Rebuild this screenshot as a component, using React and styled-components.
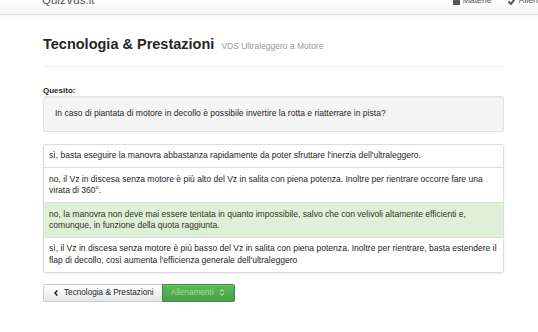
import React from 'react';
import styled, { createGlobalStyle } from 'styled-components';

const GlobalStyle = createGlobalStyle`
  html, body {
    margin: 0;
    padding: 0;
    background: #fff;
  }
  body {
    font-family: "Liberation Sans", Arial, sans-serif;
    font-size: 8.55px;
    line-height: 1.35;
    color: #262626;
  }
`;

const Navbar = styled.div`
  height: 14px;
  overflow: hidden;
  background: linear-gradient(to bottom, #fdfdfd, #f5f5f5);
  border-bottom: 1px solid #dcdcdc;
  box-shadow: 0 2px 3px rgba(0, 0, 0, 0.04);
`;

const NavInner = styled.div`
  display: flex;
  align-items: center;
  justify-content: space-between;
  margin-top: -9px;
  height: 20px;
  padding-left: 42px;
`;

const Brand = styled.span`
  font-size: 11.5px;
  color: #555;
`;

const NavLinks = styled.div`
  display: flex;
  align-items: center;
  gap: 16px;
  margin-right: -26px;
`;

const NavLink = styled.span`
  display: flex;
  align-items: center;
  gap: 3px;
  font-size: 8.7px;
  color: #555;
  white-space: nowrap;
`;

const Container = styled.div`
  width: 461px;
  margin-left: 43px;
`;

const Header = styled.div`
  padding-top: 21px;
  padding-bottom: 12px;
  border-bottom: 1px solid #eee;
`;

const Title = styled.h1`
  margin: 0;
  font-size: 14.5px;
  line-height: 16px;
  font-weight: bold;
  color: #262626;
`;

const Subtitle = styled.small`
  font-size: 8.5px;
  font-weight: normal;
  color: #999;
  margin-left: 3px;
`;

const Label = styled.div`
  margin-top: 18px;
  font-weight: bold;
  font-size: 8px;
  line-height: 11.4px;
`;

const Well = styled.div`
  padding: 11px;
  background: #f5f5f5;
  border: 1px solid #e3e3e3;
  border-radius: 2px;
  box-shadow: inset 0 1px 1px rgba(0, 0, 0, 0.05);
  line-height: 11.4px;
`;

const List = styled.div`
  margin-top: 12px;
  border-radius: 2px;
  box-shadow: 0 1px 2px rgba(0, 0, 0, 0.075);
`;

const Item = styled.div`
  padding: 5.5px 5px;
  line-height: 11.4px;
  border: 1px solid #ddd;
  margin-bottom: -1px;
  background: ${(p) => (p.$correct ? '#dff0d8' : '#fff')};
  color: ${(p) => (p.$correct ? '#2a3826' : '#262626')};
  &:first-child { border-radius: 2px 2px 0 0; }
  &:last-child { border-radius: 0 0 2px 2px; margin-bottom: 0; }
`;

const ButtonGroup = styled.div`
  display: flex;
  margin-top: 11px;
`;

const Button = styled.button`
  display: flex;
  align-items: center;
  gap: 6px;
  height: 18px;
  padding: ${(p) => (p.$success ? '0 9px 0 8px' : '0 8px 0 10px')};
  font-family: inherit;
  font-size: 8.2px;
  border: 1px solid ${(p) => (p.$success ? '#3e8f3e' : '#ccc')};
  background: ${(p) =>
    p.$success
      ? 'linear-gradient(to bottom, #5cb85c, #48a048)'
      : 'linear-gradient(to bottom, #fff, #e6e6e6)'};
  color: ${(p) => (p.$success ? '#a6dc8e' : '#262626')};
  border-radius: ${(p) => (p.$success ? '0 2px 2px 0' : '2px 0 0 2px')};
  margin-left: ${(p) => (p.$success ? '-1px' : '0')};
  box-shadow: inset 0 1px 0 rgba(255, 255, 255, 0.15), 0 1px 1px rgba(0, 0, 0, 0.075);
`;

const answers = [
  { text: "sì, basta eseguire la manovra abbastanza rapidamente da poter sfruttare l'inerzia dell'ultraleggero." },
  { text: 'no, il Vz in discesa senza motore è più alto del Vz in salita con piena potenza. Inoltre per rientrare occorre fare una virata di 360°.' },
  { text: 'no, la manovra non deve mai essere tentata in quanto impossibile, salvo che con velivoli altamente efficienti e, comunque, in funzione della quota raggiunta.', correct: true },
  { text: "sì, il Vz in discesa senza motore è più basso del Vz in salita con piena potenza. Inoltre per rientrare, basta estendere il flap di decollo, così aumenta l'efficienza generale dell'ultraleggero" },
];

export default function App() {
  return (
    <>
      <GlobalStyle />
      <Navbar>
        <NavInner>
          <Brand>QuizVds.it</Brand>
          <NavLinks>
            <NavLink>
              <svg width="7" height="8" viewBox="0 0 7 8"><rect x="0" y="0" width="7" height="8" fill="#555" /></svg>
              Materie
            </NavLink>
            <NavLink>
              <svg width="8" height="8" viewBox="0 0 8 8"><path d="M0.5 4.5 L3 7 L7.5 1" stroke="#555" strokeWidth="2" fill="none" /></svg>
              Allenamenti
            </NavLink>
          </NavLinks>
        </NavInner>
      </Navbar>
      <Container>
        <Header>
          <Title>
            Tecnologia &amp; Prestazioni <Subtitle>VDS Ultraleggero a Motore</Subtitle>
          </Title>
        </Header>
        <Label>Quesito:</Label>
        <Well>In caso di piantata di motore in decollo è possibile invertire la rotta e riatterrare in pista?</Well>
        <List>
          {answers.map((a, i) => (
            <Item key={i} $correct={a.correct}>{a.text}</Item>
          ))}
        </List>
        <ButtonGroup>
          <Button>
            <svg width="4" height="6" viewBox="0 0 4 6"><path d="M3.3 0.5 L1 3 L3.3 5.5" stroke="#262626" strokeWidth="1.6" fill="none" /></svg>
            Tecnologia &amp; Prestazioni
          </Button>
          <Button $success>
            Allenamenti
            <svg width="6" height="7" viewBox="0 0 6 7"><path d="M1 2.5 L3 0.8 L5 2.5 M1 4.5 L3 6.2 L5 4.5" stroke="#a6dc8e" strokeWidth="1.1" fill="none" /></svg>
          </Button>
        </ButtonGroup>
      </Container>
    </>
  );
}
